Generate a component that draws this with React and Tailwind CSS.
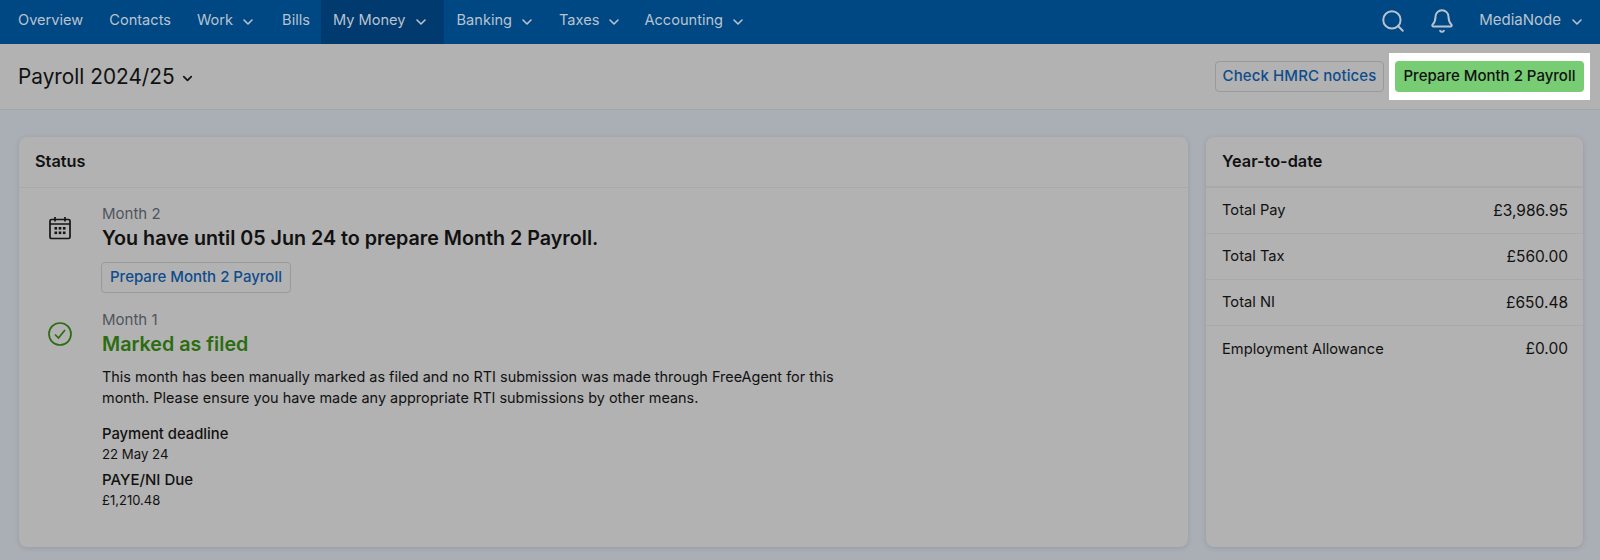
import { ChevronDown, Search, Bell } from 'lucide-react';

const navItems = [
    { label: 'Overview', cls: 'px-[13px]' },
    { label: 'Contacts', cls: 'px-[13px]' },
    { label: 'Work', menu: true, cls: 'px-[13px]' },
    { label: 'Bills', cls: 'pl-[13px] pr-[11px]' },
    { label: 'My Money', menu: true, cls: 'pl-[12px] pr-[15px] bg-[#003a6e]' },
    { label: 'Banking', menu: true, cls: 'pl-[13px] pr-[11px]' },
    { label: 'Taxes', menu: true, cls: 'pl-[13px] pr-[9px]' },
    { label: 'Accounting', menu: true, cls: 'px-[13px]' },
];

const totals = [
    { label: 'Total Pay', value: '£3,986.95' },
    { label: 'Total Tax', value: '£560.00' },
    { label: 'Total NI', value: '£650.48' },
    { label: 'Employment Allowance', value: '£0.00' },
];

const CalendarIcon = () => (
    <svg width="24" height="24" viewBox="0 0 24 24" fill="none" stroke="#141414" strokeWidth="1.7">
        <rect x="2" y="3.5" width="20" height="19" rx="1.5" />
        <path d="M2 8h20M7 1v4.5M17 1v4.5" />
        <g fill="#141414" stroke="none">
            <rect x="6.5" y="11" width="2.6" height="2.6" />
            <rect x="10.7" y="11" width="2.6" height="2.6" />
            <rect x="14.9" y="11" width="2.6" height="2.6" />
            <rect x="6.5" y="15.5" width="2.6" height="2.6" />
            <rect x="10.7" y="15.5" width="2.6" height="2.6" />
            <rect x="14.9" y="15.5" width="2.6" height="2.6" />
        </g>
    </svg>
);

const CheckIcon = () => (
    <svg width="24" height="24" viewBox="0 0 24 24" fill="none" stroke="#2b6d10" strokeWidth="1.7">
        <circle cx="12" cy="12" r="11" />
        <path d="M7 12.5l3.5 3.5 6.5-8" />
    </svg>
);

const App = () => {
    return (
        <div className="w-[1600px] h-[560px] overflow-hidden bg-[#aaaeb5] font-['Inter',sans-serif] text-[#111111]">
            <nav className="flex items-center h-[44px] bg-[#004884] text-[#b9c3cf] text-[14.6px] pl-[5px] pr-[15px]">
                {navItems.map((item) => (
                    <div key={item.label} className={`flex items-center h-full pb-[3px] ${item.cls}`}>
                        <span>{item.label}</span>
                        {item.menu && <ChevronDown size={16} strokeWidth={2.4} className="ml-[7px] mt-[2px]" />}
                    </div>
                ))}
                <div className="flex items-center ml-auto pb-[3px]">
                    <Search size={26} strokeWidth={1.8} className="mr-[23px]" />
                    <Bell size={26} strokeWidth={1.8} className="mr-[24px]" />
                    <span className="text-[15px]">MediaNode</span>
                    <ChevronDown size={16} strokeWidth={2.4} className="ml-[8px] mt-[2px]" />
                </div>
            </nav>

            <header className="flex items-center justify-between h-[66px] bg-[#b2b2b2] border-b border-[#a4a6aa] pl-[18px] pr-[16px]">
                <div className="flex items-center gap-[5px] text-[20.8px] pt-[1px]">
                    <span>Payroll 2024/25</span>
                    <ChevronDown size={15} strokeWidth={2.6} className="mt-[3px]" />
                </div>
                <div className="flex items-center">
                    <button className="h-[31px] w-[169px] rounded-[4px] border border-[#999a9c] text-[15px] tracking-[0.1px] font-medium text-[#0e4c8c]">Check HMRC notices</button>
                    <div className="ml-[5px] -mr-[6px] px-[6px] py-[8px] bg-white">
                        <button className="block h-[31px] w-[189px] rounded-[4px] bg-[#78cc73] text-[15px] font-medium">Prepare Month 2 Payroll</button>
                    </div>
                </div>
            </header>

            <main className="flex gap-[18px] pl-[19px] pr-[17px] pt-[27px]">
                <section className="flex-1 h-[410px] rounded-[8px] bg-[#b2b2b2] shadow-[0_1px_4px_rgba(90,100,120,0.25)]">
                    <h2 className="h-[51px] flex items-center px-[16px] pb-[1px] text-[16.3px] font-semibold border-b border-[#a9a9a9]">Status</h2>
                    <div className="flex pt-[16px]">
                        <div className="w-[83px] flex justify-center pr-[1px] pt-[12px] shrink-0"><CalendarIcon /></div>
                        <div>
                            <p className="text-[15px] leading-[19px] text-[#50555c]">Month 2</p>
                            <p className="text-[19.7px] leading-[30px] font-semibold">You have until 05 Jun 24 to prepare Month 2 Payroll.</p>
                            <button className="mt-[9px] h-[31px] w-[190px] -ml-px rounded-[4px] border border-[#999a9c] text-[15px] font-medium text-[#0e4c8c]">Prepare Month 2 Payroll</button>
                        </div>
                    </div>
                    <div className="flex pt-[17px]">
                        <div className="w-[83px] flex justify-center pr-[1px] pt-[12px] shrink-0"><CheckIcon /></div>
                        <div>
                            <p className="text-[15px] leading-[19px] text-[#50555c]">Month 1</p>
                            <p className="text-[19.7px] leading-[30px] font-semibold text-[#2b6d10]">Marked as filed</p>
                            <p className="mt-[7px] w-[750px] text-[14.45px] leading-[21px]">This month has been manually marked as filed and no RTI submission was made through FreeAgent for this month. Please ensure you have made any appropriate RTI submissions by other means.</p>
                            <p className="mt-[16px] text-[14.8px] leading-[20px] font-medium">Payment deadline</p>
                            <p className="text-[13.2px] leading-[21px]">22 May 24</p>
                            <p className="mt-[4px] text-[15px] leading-[21px] font-medium">PAYE/NI Due</p>
                            <p className="text-[13px] leading-[21px]">£1,210.48</p>
                        </div>
                    </div>
                </section>

                <aside className="w-[377px] h-[410px] shrink-0 rounded-[8px] bg-[#b2b2b2] shadow-[0_1px_4px_rgba(90,100,120,0.25)]">
                    <h2 className="h-[51px] flex items-center px-[16px] text-[16.3px] font-semibold border-b-2 border-[#a9a9a9]">Year-to-date</h2>
                    {totals.map((row) => (
                        <div key={row.label} className="flex items-center justify-between h-[46px] pl-[16px] pr-[15px] text-[14.7px] border-b border-[#a9a9a9] last:border-b-0">
                            <span>{row.label}</span>
                            <span className="text-[15.5px]">{row.value}</span>
                        </div>
                    ))}
                </aside>
            </main>
        </div>
    );
};

export default App;
